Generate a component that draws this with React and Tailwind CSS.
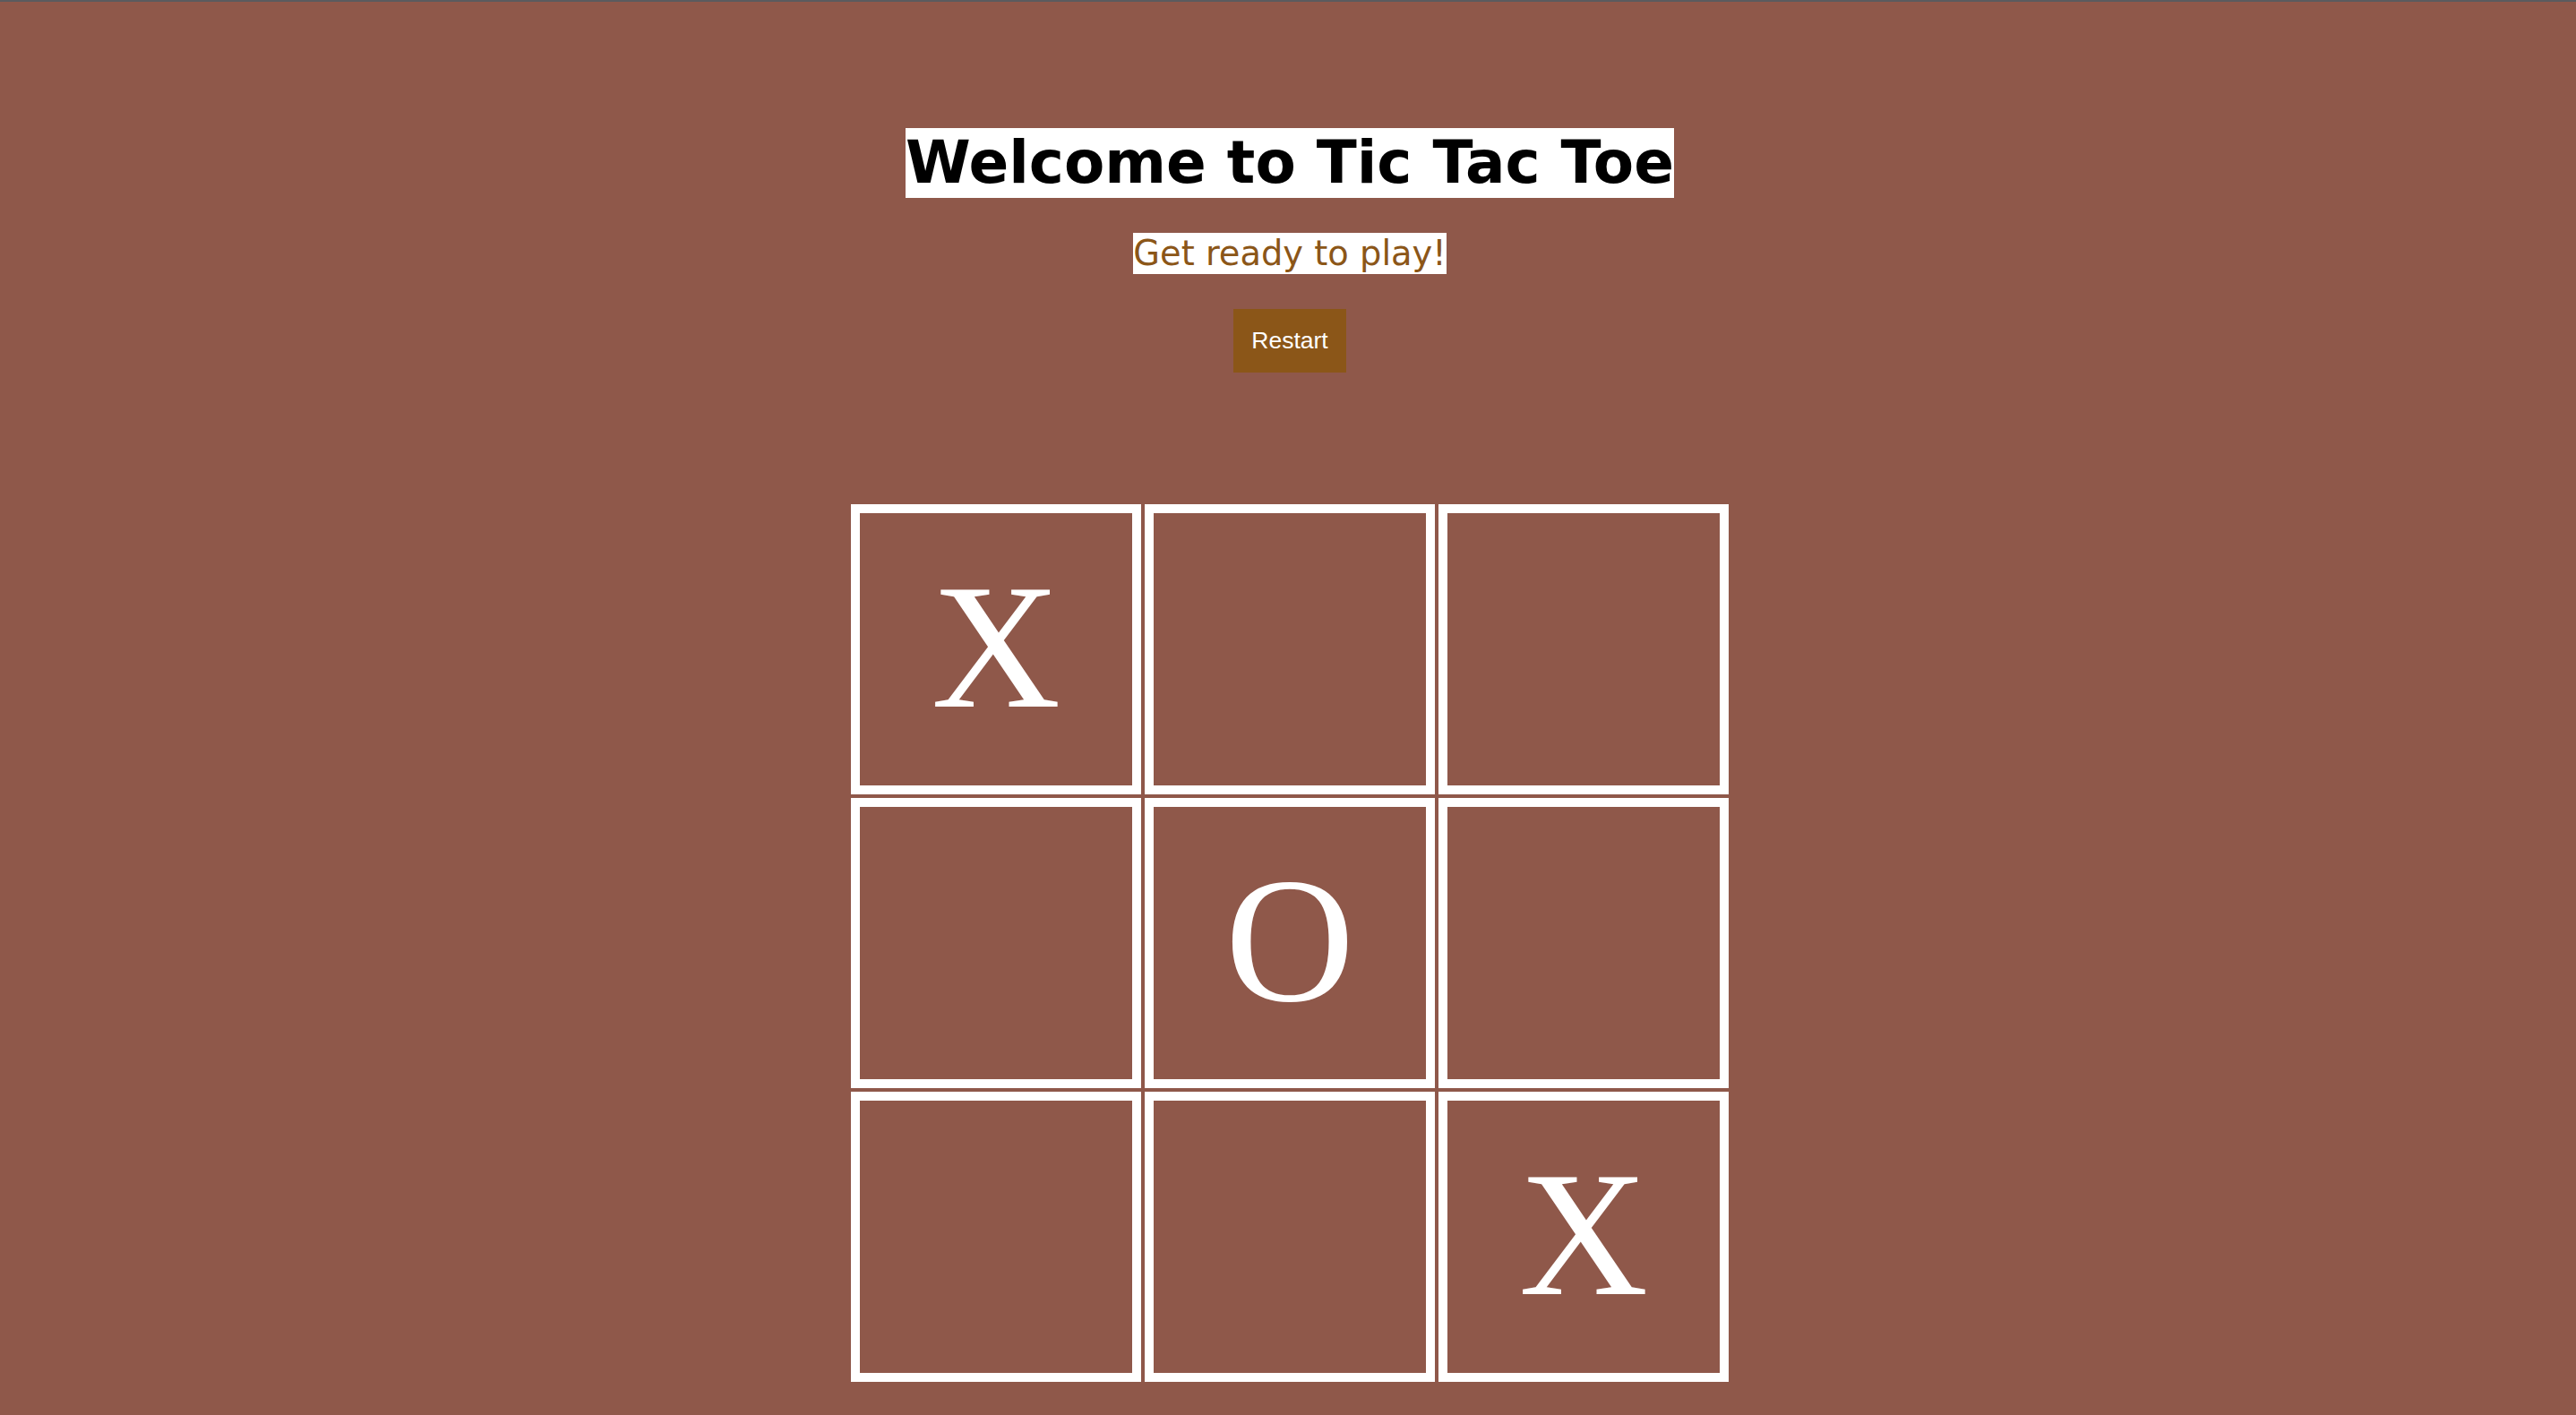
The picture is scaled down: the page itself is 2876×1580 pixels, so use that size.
import React, { useState } from 'react';

const START = ['X', '', '', '', 'O', '', '', '', 'X'];

const Cell = ({ value, onClick }) => (
  <button
    onClick={onClick}
    className="w-[324px] h-[324px] border-[10px] border-white bg-transparent flex items-center justify-center pb-[6px] text-white text-[200px] leading-none font-['Liberation_Serif',serif] cursor-pointer"
  >
    {value}
  </button>
);

export default function App() {
  const [board, setBoard] = useState(START);

  return (
    <div className="min-h-screen bg-[#8f584a]">
      <div className="h-[2px] bg-[#5b5b5f]" />
      <div className="flex flex-col items-center pl-[4px] pb-[37px]">
        {/* Header */}
        <h1 className="mt-[141px] inline-block bg-white text-black text-[66px] leading-[78px] font-bold font-['DejaVu_Sans',sans-serif]">
          Welcome to Tic Tac Toe
        </h1>
        <p className="mt-[39px] inline-block bg-white text-[#8b5618] text-[38.4px] leading-[46px] font-['DejaVu_Sans',sans-serif]">
          Get ready to play!
        </p>
        <button
          onClick={() => setBoard(Array(9).fill(''))}
          className="mt-[39px] bg-[#8b5618] px-[20px] py-[20px] text-white text-[26.5px] leading-[31px] font-['Liberation_Sans',sans-serif]"
        >
          Restart
        </button>

        {/* Board */}
        <div className="mt-[147px] grid grid-cols-[324px_324px_324px] gap-[4px]">
          {board.map((v, i) => (
            <Cell key={i} value={v} />
          ))}
        </div>
      </div>
    </div>
  );
}
